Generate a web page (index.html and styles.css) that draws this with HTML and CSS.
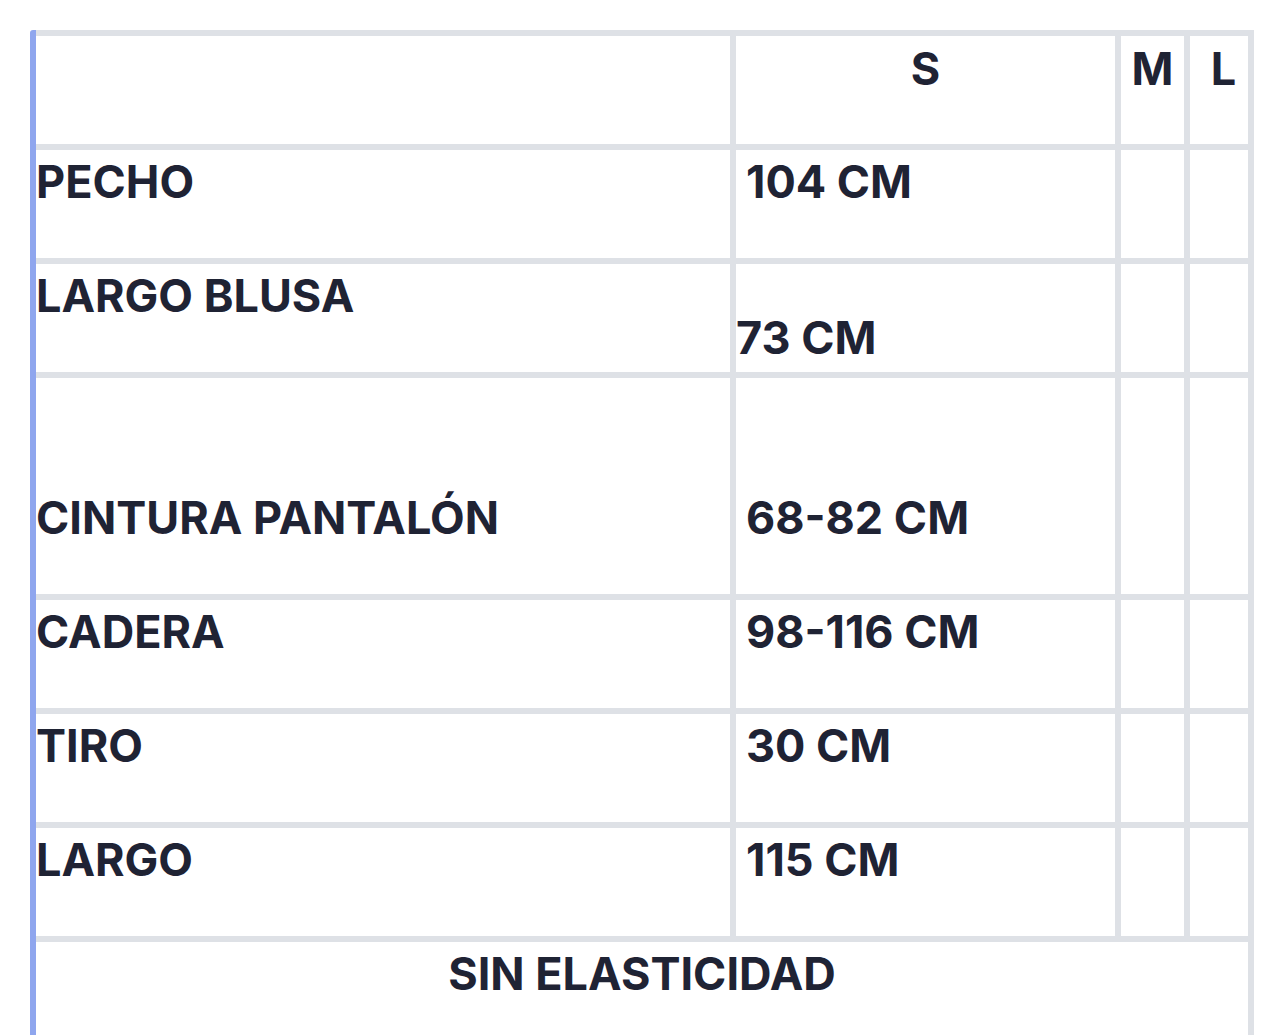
FILE: index.html
```html
<!DOCTYPE html>
<html lang="es">
<head>
<meta charset="utf-8">
<title>Tabla de medidas</title>
<link rel="stylesheet" href="styles.css">
</head>
<body>
<div class="quote">
  <div class="size-table">
    <div class="cell head"></div>
    <div class="cell head center">S</div>
    <div class="cell head center">M</div>
    <div class="cell head center shift">L</div>

    <div class="cell">PECHO</div>
    <div class="cell val">104 CM</div>
    <div class="cell"></div>
    <div class="cell"></div>

    <div class="cell">LARGO BLUSA</div>
    <div class="cell"><br>73 CM</div>
    <div class="cell"></div>
    <div class="cell"></div>

    <div class="cell tall">CINTURA PANTALÓN</div>
    <div class="cell tall val">68-82 CM</div>
    <div class="cell tall"></div>
    <div class="cell tall"></div>

    <div class="cell">CADERA</div>
    <div class="cell val">98-116 CM</div>
    <div class="cell"></div>
    <div class="cell"></div>

    <div class="cell">TIRO</div>
    <div class="cell val">30 CM</div>
    <div class="cell"></div>
    <div class="cell"></div>

    <div class="cell">LARGO</div>
    <div class="cell val">115 CM</div>
    <div class="cell"></div>
    <div class="cell"></div>

    <div class="cell full center">SIN ELASTICIDAD</div>
  </div>
</div>
</body>
</html>
```
FILE: styles.css
```css
html, body {
  margin: 0;
  padding: 0;
  background: #ffffff;
}

body {
  font-family: "Inter", "Liberation Sans", sans-serif;
  font-weight: 700;
  font-size: 45px;
  line-height: 42px;
  color: #1f2334;
  overflow: hidden;
}

.quote {
  margin: 30px 0 0 30px;
  width: 1218px;
  border-left: 6px solid #8fa6ee;
  border-top-left-radius: 3px;
}

.size-table {
  display: grid;
  grid-template-columns: 700px 385px 69px 64px;
  border-top: 6px solid #dee1e6;
}

.cell {
  box-sizing: border-box;
  height: 114px;
  padding-top: 11px;
  border-right: 6px solid #dee1e6;
  border-bottom: 6px solid #dee1e6;
  white-space: nowrap;
}

.head {
  padding-top: 12px;
}

.center {
  text-align: center;
}

.shift {
  padding-left: 9px;
}

.val {
  padding-left: 10px;
}

.tall {
  height: 222px;
  padding-top: 119px;
}

.full {
  grid-column: 1 / -1;
  height: 130px;
}
```
